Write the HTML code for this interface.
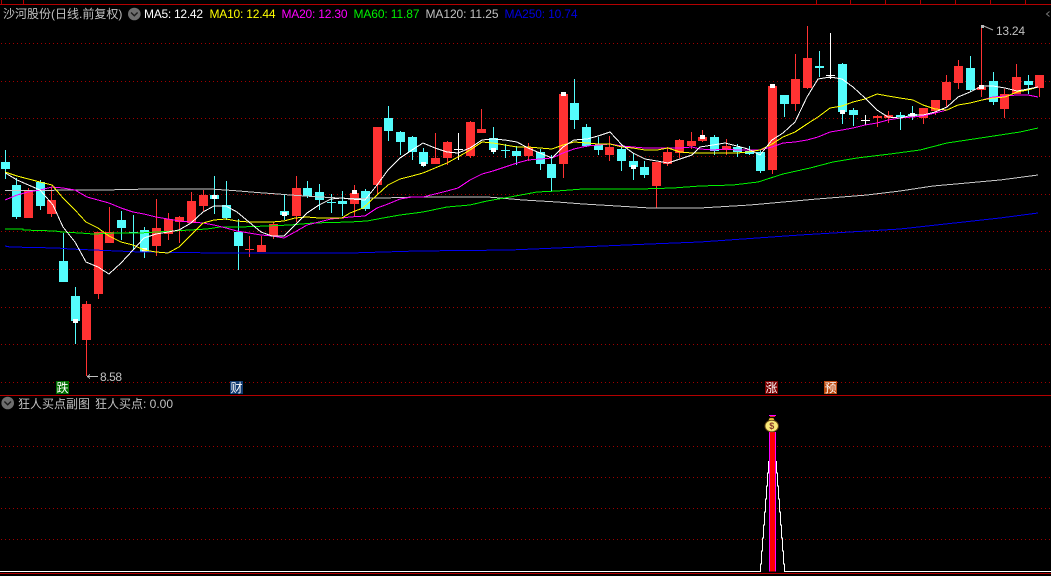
<!DOCTYPE html>
<html><head><meta charset="utf-8"><style>
html,body{margin:0;padding:0;background:#000;width:1051px;height:576px;overflow:hidden}
svg{display:block}
text{font-family:"Liberation Sans","WenQuanYi Zen Hei","Noto Sans CJK SC",sans-serif;font-size:12px}
</style></head><body>
<svg width="1051" height="576" viewBox="0 0 1051 576" xmlns="http://www.w3.org/2000/svg">
<g stroke="#a00000" stroke-width="1" stroke-dasharray="1 3" shape-rendering="crispEdges" fill="none">
<path d="M1 43.5H1051M1 81.5H1051M1 118.5H1051M1 156.5H1051M1 194.5H1051M1 231.5H1051M1 269.5H1051M1 307.5H1051M1 344.5H1051M1 382.5H1051M1 446.5H1051M1 477.5H1051M1 508.5H1051M1 539.5H1051"/>
</g>
<g stroke="#b40000" stroke-width="1" shape-rendering="crispEdges" fill="none">
<path d="M0 4.5H1051M1.5 0V4M23.5 0V4M816.5 0V4M850.5 0V4M885.5 0V4M920.5 0V4M955.5 0V4M990.5 0V4M1025.5 0V4M0 395.5H1051M0 573.5H1051"/>
</g>
<g shape-rendering="crispEdges">
<path stroke="#54fcfc" fill="none" d="M5.5 150V179M16.5 178V219M40.5 180V210M63.5 233V282M75.5 287V344M121.5 211V240M133.5 215V249M144.5 227V258M214.5 176V214M226.5 181V220M238.5 219V270M284.5 195V220M307.5 181V198M319.5 184V210M331.5 194V213M342.5 191V216M365.5 189V211M388.5 106V141M400.5 131V155M412.5 136V160M423.5 148V167M493.5 127V154M505.5 144V158M516.5 146V165M540.5 149V170M551.5 155V191M574.5 79V129M586.5 124V147M598.5 137V155M621.5 145V171M633.5 153V180M644.5 161V178M714.5 135V155M737.5 144V157M749.5 146V155M760.5 150V173M784.5 95V117M819.5 51V77M842.5 63V124M853.5 108V126M900.5 112V130M912.5 106V120M970.5 56V92M993.5 72V105M1028.5 75V94"/>
<path fill="#54fcfc" d="M1 162h9v7h-9zM12 185h9v32h-9zM36 182h9v24h-9zM59 261h9v21h-9zM71 296h9v25h-9zM117 220h9v8h-9zM129 232h9v1h-9zM140 230h9v22h-9zM210 195h9v4h-9zM222 205h9v13h-9zM234 232h9v14h-9zM280 211h9v4h-9zM303 188h9v8h-9zM315 192h9v8h-9zM327 202h9v1h-9zM338 201h9v3h-9zM361 191h9v18h-9zM384 118h9v13h-9zM396 132h9v10h-9zM408 137h9v15h-9zM419 152h9v12h-9zM489 138h9v12h-9zM501 150h9v1h-9zM512 151h9v5h-9zM536 152h9v12h-9zM547 164h9v14h-9zM570 103h9v17h-9zM582 127h9v19h-9zM594 145h9v5h-9zM617 149h9v12h-9zM629 161h9v6h-9zM640 167h9v8h-9zM710 137h9v14h-9zM733 147h9v5h-9zM745 151h9v3h-9zM756 152h9v19h-9zM780 95h9v9h-9zM815 66h9v2h-9zM838 64h9v48h-9zM849 110h9v5h-9zM896 115h9v2h-9zM908 114h9v2h-9zM966 68h9v22h-9zM989 81h9v21h-9zM1024 81h9v4h-9z"/>
<path stroke="#ff3232" fill="none" d="M28.5 188V218M51.5 187V217M86.5 301V376M98.5 232V299M109.5 207V243M156.5 199V256M168.5 213V240M179.5 216V243M191.5 192V223M203.5 190V211M249.5 236V257M261.5 236V252M273.5 222V239M296.5 176V222M354.5 185V217M377.5 127V195M435.5 133V164M447.5 141V165M470.5 121V158M481.5 109V133M528.5 143V161M563.5 92V178M609.5 136V161M656.5 162V208M667.5 147V166M679.5 139V158M691.5 132V149M702.5 130V142M726.5 139V155M772.5 86V174M795.5 54V111M807.5 26V89M877.5 115V127M888.5 111V123M923.5 108V124M935.5 100V115M946.5 75V107M958.5 60V89M981.5 26V97M1004.5 89V118M1016.5 64V94M1039.5 75V97"/>
<path fill="#ff3232" d="M24 191h9v27h-9zM47 200h9v14h-9zM82 304h9v36h-9zM94 232h9v62h-9zM105 232h9v11h-9zM152 228h9v18h-9zM164 219h9v15h-9zM175 217h9v5h-9zM187 201h9v22h-9zM199 195h9v11h-9zM245 249h9v1h-9zM257 245h9v7h-9zM269 224h9v12h-9zM292 188h9v28h-9zM350 193h9v11h-9zM373 127h9v58h-9zM431 158h9v6h-9zM443 142h9v16h-9zM466 122h9v34h-9zM477 129h9v4h-9zM524 147h9v9h-9zM559 94h9v70h-9zM605 147h9v8h-9zM652 162h9v24h-9zM663 152h9v12h-9zM675 140h9v13h-9zM687 141h9v5h-9zM698 137h9v4h-9zM722 146h9v4h-9zM768 86h9v84h-9zM791 79h9v25h-9zM803 58h9v30h-9zM873 116h9v2h-9zM884 115h9v3h-9zM919 108h9v10h-9zM931 100h9v11h-9zM942 82h9v18h-9zM954 66h9v17h-9zM977 87h9v3h-9zM1000 94h9v15h-9zM1012 77h9v17h-9zM1035 75h9v13h-9z"/>
<path stroke="#fff" fill="none" d="M458.5 133V160M454 149.5H463M830.5 33V79M826 75.5H835M826 77.5H835M865.5 115V125M861 120.5H870"/>
<path fill="#fff" d="M73 319h5v4h-5zM142 248h5v4h-5zM212 195h5v4h-5zM282 212h5v4h-5zM352 190h5v4h-5zM421 162h5v4h-5zM491 148h5v4h-5zM561 92h5v4h-5zM631 165h5v4h-5zM700 135h5v4h-5zM770 84h5v4h-5zM840 110h5v4h-5zM910 113h5v4h-5zM979 85h5v4h-5z"/>
</g>
<g fill="none" stroke-width="1" shape-rendering="crispEdges">
<polyline stroke="#c8c8c8" points="5,190.5 103,190 150,189 210,189 233,190.5 257,192.5 278,194 290,195 320,197 350,198.5 383,198 417,197 453,197 487,197 500,198 523,200 557,202 583,204 617,206 650,208 700,208 750,205 817,199 867,195 900,191 933,186 967,183 1000,180 1038,175"/>
<polyline stroke="#0000f0" points="5,246 10,247 57,248 70,249 117,251 140,252 220,253 350,253 417,251 510,250 557,248 603,246 650,244 700,242 800,235 900,229 1000,218 1038,213"/>
<polyline stroke="#00f000" points="5,229 23,229 23,230 55,231 62,232 80,233 93,234 117,233 140,233 173,231 207,229 220,227 240,227 267,226 290,225 313,223 350,222 367,221 383,218 400,215 423,212 447,207 470,205 487,201 510,197 537,192 557,191 583,189 613,189 640,189 673,188 700,186 733,185 758,182 783,174 810,168 833,162 857,158 890,154 920,150 947,143 987,137 1020,132 1038,128"/>
<polyline stroke="#ff00ff" points="5,200 17,195 28,192 40,190 52,187 63,188 75,190 87,197 98,200 109,203 121,208 133,212 144,214 156,217 168,219 179,221 191,222 203,223 214,225 226,228 237,231 249,233 261,235 272,236 284,238 295,232 307,225 319,222 331,219 342,218 350,217 365,216 377,208 388,204 400,199 412,197 423,197 435,194 447,191 458,188 470,180 482,174 493,171 505,167 517,163 528,160 540,159 552,158 563,153 574,149 587,146 598,145 610,144 622,146 633,147 645,148 657,148 668,148 680,148 692,147 700,149 713,150 725,149 737,150 748,150 760,150 772,147 783,143 795,142 807,140 818,137 830,132 842,130 853,128 865,125 877,123 888,120 900,118 913,117 923,116 935,113 947,110 958,105 970,103 982,100 993,97 1005,96 1017,95 1028,95 1038,97"/>
<polyline stroke="#ffff00" points="5,172 17,176 40,182 52,185 63,198 75,210 86,222 98,228 109,236 121,242 133,245 144,250 156,252 168,253 179,247 191,235 203,223 214,220 226,219 237,221 249,222 261,222 272,222 284,221 295,218 307,217 319,218 331,218 342,218 350,213 363,208 377,195 388,185 400,179 412,176 423,173 435,168 447,163 458,157 470,150 482,142 493,143 505,145 517,147 528,147 540,148 552,149 563,145 574,142 587,143 598,144 610,144 622,147 633,148 645,150 657,150 668,148 680,152 692,153 713,153 725,153 737,153 748,152 760,150 772,144 783,137 795,132 807,124 818,117 830,108 842,106 853,102 865,99 877,94 888,96 900,98 913,100 923,105 935,109 947,110 958,105 970,103 982,100 993,98 1005,97 1017,92 1028,90 1038,87"/>
<polyline stroke="#ffffff" points="5,172.7 17,180 40,190 53,205 63,227 75,242 86,262 98,267 109,274 121,263 133,250 144,238 156,234 168,232 179,230 191,223 203,212 214,206 226,206 237,212 249,222 261,232 272,236 284,236 295,225 307,213 319,205 331,199 342,198 350,199 365,200 377,185 388,170 400,158 412,150 423,143 435,148 447,152 458,153 470,148 482,140 493,139 505,140 517,142 528,148 540,153 552,158 563,147 574,140 587,139 598,136 610,132 622,145 633,153 645,159 657,161 668,163 680,159 692,155 700,147 713,145 725,143 737,146 748,149 760,155 772,140 783,133 795,122 807,97 818,79 830,77 842,79 853,87 865,98 877,110 888,117 900,118 913,115 923,115 935,112 947,107 958,97 970,92 982,86 993,86 1005,88 1017,91 1028,89 1038,87"/>
</g>
<g>
<text x="3" y="18" fill="#c0c0c0">沙河股份(日线.前复权)</text>
<circle cx="134.3" cy="14" r="6.3" fill="#6e6e6e"/>
<path d="M131 12.5l3.3 3.3 3.3-3.3" stroke="#1c1c1c" stroke-width="1.4" fill="none"/>
<text x="144" y="18" fill="#ffffff" textLength="59">MA5: 12.42</text>
<text x="209.5" y="18" fill="#ffff00" textLength="66">MA10: 12.44</text>
<text x="281.5" y="18" fill="#ff00ff" textLength="66">MA20: 12.30</text>
<text x="353.5" y="18" fill="#00f000" textLength="66">MA60: 11.87</text>
<text x="425.5" y="18" fill="#c0c0c0" textLength="73">MA120: 11.25</text>
<text x="504.5" y="18" fill="#0000e0" textLength="73">MA250: 10.74</text>
<path d="M1049.5 11.5l-3 2.5 3 2.5" stroke="#777" fill="none"/>
<path d="M982.5 25.5L993 30" stroke="#aaa" fill="none"/>
<path d="M981 25h3v3h-3z" fill="#bbb"/>
<text x="996" y="35" fill="#c0c0c0" textLength="29">13.24</text>
<path d="M87.5 376.5H98M90 374.5l-2.5 2 2.5 2" stroke="#c0c0c0" fill="none" shape-rendering="crispEdges"/>
<text x="100" y="381" fill="#c0c0c0" textLength="22">8.58</text>
<rect x="56" y="381" width="13" height="13" fill="#006e00"/>
<text x="56.5" y="392" fill="#fff">跌</text>
<rect x="230" y="381" width="13" height="13" fill="#103a70"/>
<text x="230.5" y="392" fill="#fff">财</text>
<rect x="765" y="381" width="13" height="13" fill="#7a0000"/>
<text x="765.5" y="392" fill="#fff">涨</text>
<rect x="824" y="381" width="13" height="13" fill="#b8480e"/>
<text x="824.5" y="392" fill="#fff">预</text>
<circle cx="7.7" cy="403" r="6.3" fill="#6e6e6e"/>
<path d="M4.4 401.5l3.3 3.3 3.3-3.3" stroke="#1c1c1c" stroke-width="1.4" fill="none"/>
<text x="18" y="408" fill="#c0c0c0">狂人买点副图</text>
<text x="95" y="408" fill="#c0c0c0">狂人买点: 0.00</text>
</g>
<g shape-rendering="crispEdges">
<path fill="none" stroke="#fff" d="M0 571.5H760.5V564H761.5V551H762.5V538H763.5V525H764.5V512H765.5V499H766.5V486H767.5V473H768.5V461M776.5 461V473H777.5V486H778.5V499H779.5V512H780.5V525H781.5V538H782.5V551H783.5V564H784.5V571.5H1051"/>
<rect x="769" y="432" width="7" height="139.5" fill="#ff00ff"/>
<rect x="770" y="432" width="5" height="139.5" fill="#ff0000"/>
<rect x="769" y="415" width="7" height="1" fill="#ff00ff"/>
<rect x="770" y="416" width="5" height="1" fill="#e02020"/>
</g>
<path d="M769.5 418h4l1 2.5h-6z" fill="#ffd830" stroke="#5a3c10" stroke-width=".5"/>
<ellipse cx="771.7" cy="426" rx="6.7" ry="5.8" fill="#f8e878" stroke="#6a4a18" stroke-width="1"/>
<text x="771.7" y="429" text-anchor="middle" style="font-size:9px;font-weight:bold" fill="#8a3a2a">$</text>
</svg>
</body></html>
